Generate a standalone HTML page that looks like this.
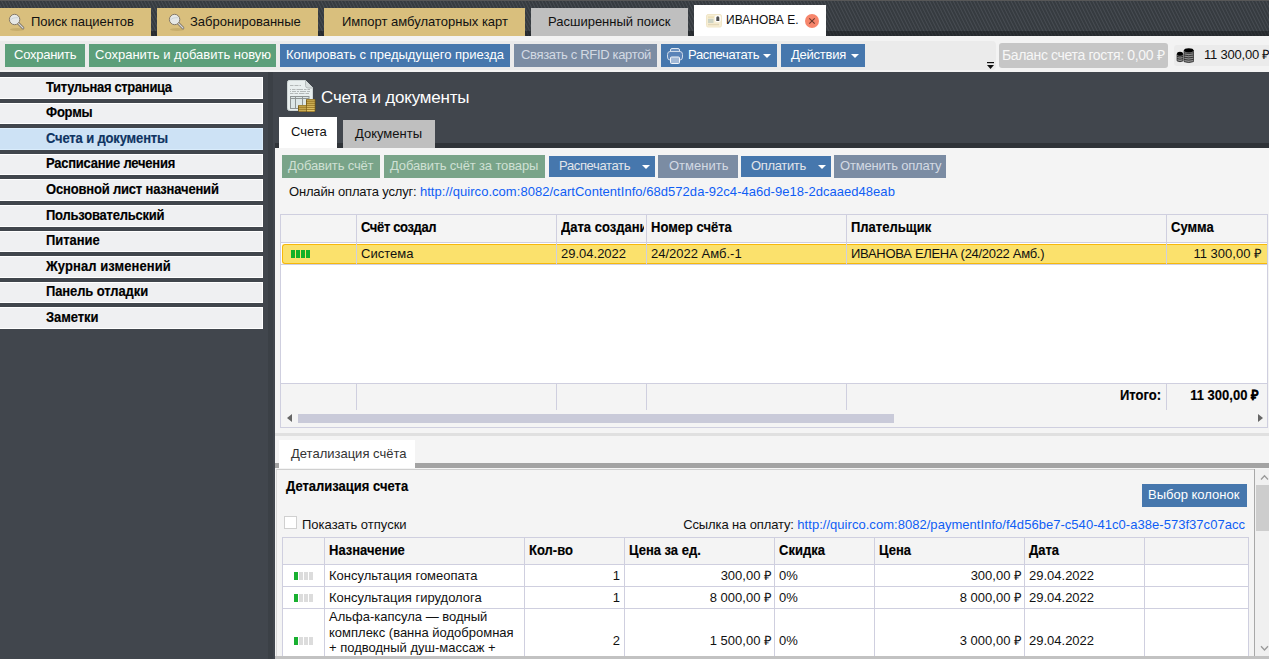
<!DOCTYPE html>
<html><head><meta charset="utf-8">
<style>
*{box-sizing:border-box;margin:0;padding:0}
html,body{width:1269px;height:659px;overflow:hidden;background:#41464d}
body{font-family:"Liberation Sans",sans-serif;font-size:13px;color:#111;position:relative}
.a{position:absolute}
.t{position:absolute;white-space:nowrap;line-height:16px}
#topbar{left:0;top:0;width:1269px;height:36px;background:repeating-linear-gradient(63.43deg,#363b40 0px,#363b40 0.9px,#454a50 1.6px,#454a50 2.0px,#363b40 2.7px,#363b40 3.04px)}
#topline{left:0;top:0;width:1269px;height:1px;background:#575757}
#topband{left:0;top:31px;width:1269px;height:5px;background:rgba(20,22,25,.45)}
.tab{position:absolute;top:8px;height:28px;background:#d9bf7d}
.tab .t{top:13px}
.btn{position:absolute;height:23px;color:#fff}
.btn .t{top:3px}
.green{background:#5c9f7a}
.blue{background:#4677ad}
.dis{background:#7b8ca3;color:#d3dae3}
.dgreen{background:#79a489;color:#cfe0d4}
.menu{position:absolute;left:0;width:263px;height:21.6px;background:#eff0f2;font-weight:bold;border:1px solid #fff;border-left:0}
.menu .t{left:46px;top:1.5px;color:#000;-webkit-text-stroke:0.15px;transform:scaleY(1.08);transform-origin:0 12px}
.caret{position:absolute;width:0;height:0;border-left:4px solid transparent;border-right:4px solid transparent;border-top:4px solid #fff}
.link{color:#0f5ef5}
.vl{position:absolute;width:1px;background:#cfcfdf}
.hl{position:absolute;height:1px;background:#cfcfdf}
.b{font-weight:bold;color:#000;-webkit-text-stroke:0.15px;transform:scaleY(1.08);transform-origin:0 12.5px}
</style></head><body>
<div id="topbar" class="a"></div>
<div id="topline" class="a"></div>
<div id="topband" class="a"></div>

<!-- top tabs -->
<div class="tab" style="left:0;width:151px"><div class="t" style="left:31px;top:6px">Поиск пациентов</div></div>
<div class="tab" style="left:157px;width:161px"><div class="t" style="left:33px;top:6px">Забронированные</div></div>
<div class="tab" style="left:324px;width:201px"><div class="t" style="left:18px;top:6px">Импорт амбулаторных карт</div></div>
<div class="tab" style="left:531px;width:157px;background:#bfbfbf"><div class="t" style="left:17px;top:6px">Расширенный поиск</div></div>
<div class="tab" style="left:694px;top:5px;width:132px;height:31px;background:#fff"><div class="t" style="left:32px;top:7px;font-size:12px">ИВАНОВА Е.</div></div>

<!-- toolbar -->
<div class="a" style="left:0;top:36px;width:1269px;height:36px;background:#f3f3f3"></div>
<div class="a" style="left:0;top:41px;width:996px;height:29px;background:#ebebeb;border-radius:0 4px 4px 0"></div>
<div class="btn green" style="left:5px;top:44px;width:80px"><div class="t" style="left:9px;letter-spacing:-0.25px">Сохранить</div></div>
<div class="btn green" style="left:89px;top:44px;width:187px"><div class="t" style="left:6px">Сохранить и добавить новую</div></div>
<div class="btn blue" style="left:280px;top:44px;width:230px"><div class="t" style="left:6px">Копировать с предыдущего приезда</div></div>
<div class="btn dis" style="left:514px;top:44px;width:143px"><div class="t" style="left:7px;letter-spacing:-0.33px">Связать с RFID картой</div></div>
<div class="btn blue" style="left:661px;top:44px;width:116px"><div class="t" style="left:27px;letter-spacing:-0.36px">Распечатать</div><div class="caret" style="left:102px;top:10px"></div></div>
<div class="btn blue" style="left:781px;top:44px;width:84px"><div class="t" style="left:10px;letter-spacing:-0.25px">Действия</div><div class="caret" style="left:70px;top:10px"></div></div>
<div class="a" style="left:999px;top:43px;width:169px;height:25px;background:#c6c6c6;border-radius:3px"><div class="t" style="left:3px;top:4px;color:#f7f7f7;font-size:14px;letter-spacing:-0.35px">Баланс счета гостя: 0,00 ₽</div></div>
<div class="a" style="left:1174px;top:45px;width:95px;height:21px;background:#ebebeb;border-radius:3px 0 0 3px"><div class="t" style="left:30px;top:2px;letter-spacing:-0.2px">11 300,00 ₽</div></div>

<!-- sidebar -->
<div class="menu" style="top:77px"><div class="t" style="letter-spacing:-0.33px">Титульная страница</div></div>
<div class="menu" style="top:102.6px"><div class="t" style="letter-spacing:-0.22px">Формы</div></div>
<div class="menu" style="top:128.2px;background:#cde2f5;border-color:#d9ecfb"><div class="t" style="letter-spacing:-0.15px;color:#0f3462">Счета и документы</div></div>
<div class="menu" style="top:153.8px"><div class="t" style="letter-spacing:-0.24px">Расписание лечения</div></div>
<div class="menu" style="top:179.4px"><div class="t" style="letter-spacing:-0.18px">Основной лист назначений</div></div>
<div class="menu" style="top:205px"><div class="t" style="letter-spacing:-0.22px">Пользовательский</div></div>
<div class="menu" style="top:230.6px"><div class="t" style="letter-spacing:-0.04px">Питание</div></div>
<div class="menu" style="top:256.2px"><div class="t" style="letter-spacing:0.08px">Журнал изменений</div></div>
<div class="menu" style="top:281.8px"><div class="t" style="letter-spacing:-0.11px">Панель отладки</div></div>
<div class="menu" style="top:307.4px"><div class="t" style="letter-spacing:-0.06px">Заметки</div></div>
<div class="a" style="left:268px;top:72px;width:5px;height:587px;background:#3b4046"></div>

<!-- content header -->
<div class="t" style="left:321px;top:88px;font-size:17px;line-height:20px;color:#fff;-webkit-text-stroke:0;letter-spacing:-0.2px">Счета и документы</div>
<div class="a" style="left:275px;top:143px;width:994px;height:5px;background:#2f3338"></div>
<div class="a" style="left:279px;top:117px;width:58px;height:31px;background:#fff"><div class="t" style="left:12px;top:7px">Счета</div></div>
<div class="a" style="left:343px;top:120px;width:92px;height:28px;background:#bfbfbf"><div class="t" style="left:12px;top:6px">Документы</div></div>

<!-- content panel -->
<div class="a" style="left:275px;top:148px;width:994px;height:511px;background:#f4f4f4"></div>

<!-- content buttons -->
<div class="btn dgreen" style="left:282px;top:155px;width:98px"><div class="t" style="left:6px;letter-spacing:-0.15px">Добавить счёт</div></div>
<div class="btn dgreen" style="left:384px;top:155px;width:161px"><div class="t" style="left:6px;letter-spacing:-0.14px">Добавить счёт за товары</div></div>
<div class="btn blue" style="left:549px;top:156px;width:106px;height:21px;color:#e2e5ea"><div class="t" style="left:10px;top:2px;letter-spacing:-0.36px">Распечатать</div><div class="caret" style="left:93px;top:9px"></div></div>
<div class="btn dis" style="left:658px;top:155px;width:80px"><div class="t" style="left:11px">Отменить</div></div>
<div class="btn blue" style="left:741px;top:156px;width:90px;height:21px;color:#e2e5ea"><div class="t" style="left:10px;top:2px;letter-spacing:-0.35px">Оплатить</div><div class="caret" style="left:77px;top:9px"></div></div>
<div class="btn dis" style="left:834px;top:155px;width:112px"><div class="t" style="left:6px;letter-spacing:-0.2px">Отменить оплату</div></div>
<div class="t" style="left:289px;top:184px"><span style="letter-spacing:-0.17px">Онлайн оплата услуг: </span><span class="link" style="letter-spacing:0.04px">http://quirco.com:8082/cartContentInfo/68d572da-92c4-4a6d-9e18-2dcaaed48eab</span></div>

<!-- table 1 -->
<div class="a" style="left:280px;top:214px;width:988px;height:214px;border:1px solid #cfcfdf;background:#fff"></div>
<div class="a" style="left:281px;top:215px;width:986px;height:27px;background:#f4f4f4"></div>
<div class="hl" style="left:281px;top:242px;width:986px"></div>
<div class="hl" style="left:281px;top:264px;width:986px"></div>
<div class="a" style="left:282px;top:244px;width:985px;height:20px;background:#fbe16c;border:1px solid #f7b80a;border-right:0;border-radius:3px 0 0 3px"></div>
<div class="vl" style="left:356px;top:215px;height:49px"></div>
<div class="vl" style="left:556px;top:215px;height:49px"></div>
<div class="vl" style="left:646px;top:215px;height:49px"></div>
<div class="vl" style="left:846px;top:215px;height:49px"></div>
<div class="vl" style="left:1166px;top:215px;height:49px"></div>
<div class="t b" style="left:361px;top:220px;letter-spacing:-0.36px">Счёт создал</div>
<div class="t b" style="left:561px;top:220px;width:83px;overflow:hidden">Дата создания</div>
<div class="t b" style="left:651px;top:220px">Номер счёта</div>
<div class="t b" style="left:851px;top:220px">Плательщик</div>
<div class="t b" style="left:1171px;top:220px">Сумма</div>
<div class="t" style="left:361px;top:246px">Система</div>
<div class="t" style="left:561px;top:246px">29.04.2022</div>
<div class="t" style="left:651px;top:246px">24/2022 Амб.-1</div>
<div class="t" style="left:851px;top:246px;letter-spacing:-0.3px">ИВАНОВА ЕЛЕНА (24/2022 Амб.)</div>
<div class="t" style="left:1166px;top:246px;width:96px;text-align:right">11 300,00 ₽</div>
<div class="a" style="left:281px;top:384px;width:986px;height:43px;background:#f4f4f4"></div>
<div class="hl" style="left:281px;top:383px;width:986px"></div>
<div class="vl" style="left:356px;top:384px;height:26px"></div>
<div class="vl" style="left:556px;top:384px;height:26px"></div>
<div class="vl" style="left:646px;top:384px;height:26px"></div>
<div class="vl" style="left:846px;top:384px;height:26px"></div>
<div class="vl" style="left:1166px;top:384px;height:26px"></div>
<div class="t b" style="left:1000px;top:388px;width:161px;text-align:right">Итого:</div>
<div class="t b" style="left:1166px;top:388px;width:93px;text-align:right">11 300,00 ₽</div>
<div class="a" style="left:298px;top:414px;width:596px;height:9px;background:#c9cad9"></div>

<!-- separator + detail tab -->
<div class="a" style="left:275px;top:433px;width:994px;height:3px;background:#e0e0e0"></div>
<div class="a" style="left:275px;top:463px;width:994px;height:5px;background:#a3a3a3"></div>
<div class="a" style="left:279px;top:440px;width:136px;height:28px;background:#fff"><div class="t" style="left:12px;top:6px;color:#333">Детализация счёта</div></div>
<div class="a" style="left:276px;top:469px;width:993px;height:187px;border-top:1px solid #cfcfcf;border-left:1px solid #d9d9d9;background:#f4f4f4"></div>
<div class="t b" style="left:286px;top:479px">Детализация счета</div>
<div class="btn blue" style="left:1142px;top:484px;width:105px"><div class="t" style="left:6px">Выбор колонок</div></div>
<div class="a" style="left:284px;top:516px;width:13px;height:13px;background:#fff;border:1px solid #d0d0d0"></div>
<div class="t" style="left:302px;top:517px">Показать отпуски</div>
<div class="t" style="left:600px;top:517px;width:645px;text-align:right"><span style="letter-spacing:-0.12px">Ссылка на оплату: </span><span class="link" style="letter-spacing:0.035px">http://quirco.com:8082/paymentInfo/f4d56be7-c540-41c0-a38e-573f37c07acc</span></div>

<!-- table 2 -->
<div class="a" style="left:282px;top:537px;width:967px;height:130px;border:1px solid #cfcfdf;background:#fff"></div>
<div class="a" style="left:283px;top:538px;width:965px;height:26px;background:#f4f4f4"></div>
<div class="hl" style="left:283px;top:564px;width:965px"></div>
<div class="hl" style="left:283px;top:586px;width:965px"></div>
<div class="hl" style="left:283px;top:608px;width:965px"></div>
<div class="vl" style="left:324px;top:538px;height:130px"></div>
<div class="vl" style="left:524px;top:538px;height:130px"></div>
<div class="vl" style="left:624px;top:538px;height:130px"></div>
<div class="vl" style="left:774px;top:538px;height:130px"></div>
<div class="vl" style="left:874px;top:538px;height:130px"></div>
<div class="vl" style="left:1024px;top:538px;height:130px"></div>
<div class="vl" style="left:1144px;top:538px;height:130px"></div>
<div class="t b" style="left:329px;top:543px">Назначение</div>
<div class="t b" style="left:529px;top:543px">Кол-во</div>
<div class="t b" style="left:629px;top:543px">Цена за ед.</div>
<div class="t b" style="left:779px;top:543px">Скидка</div>
<div class="t b" style="left:879px;top:543px">Цена</div>
<div class="t b" style="left:1029px;top:543px">Дата</div>

<div class="t" style="left:329px;top:568px">Консультация гомеопата</div>
<div class="t" style="left:524px;top:568px;width:96px;text-align:right">1</div>
<div class="t" style="left:624px;top:568px;width:148px;text-align:right">300,00 ₽</div>
<div class="t" style="left:779px;top:568px">0%</div>
<div class="t" style="left:874px;top:568px;width:148px;text-align:right">300,00 ₽</div>
<div class="t" style="left:1029px;top:568px">29.04.2022</div>

<div class="t" style="left:329px;top:590px">Консультация гирудолога</div>
<div class="t" style="left:524px;top:590px;width:96px;text-align:right">1</div>
<div class="t" style="left:624px;top:590px;width:148px;text-align:right">8 000,00 ₽</div>
<div class="t" style="left:779px;top:590px">0%</div>
<div class="t" style="left:874px;top:590px;width:148px;text-align:right">8 000,00 ₽</div>
<div class="t" style="left:1029px;top:590px">29.04.2022</div>

<div class="t" style="left:329px;top:609px">Альфа-капсула — водный</div>
<div class="t" style="left:329px;top:625px">комплекс (ванна йодобромная</div>
<div class="t" style="left:329px;top:640px">+ подводный душ-массаж +</div>
<div class="t" style="left:524px;top:633px;width:96px;text-align:right">2</div>
<div class="t" style="left:624px;top:633px;width:148px;text-align:right">1 500,00 ₽</div>
<div class="t" style="left:779px;top:633px">0%</div>
<div class="t" style="left:874px;top:633px;width:148px;text-align:right">3 000,00 ₽</div>
<div class="t" style="left:1029px;top:633px">29.04.2022</div>

<!-- vertical scrollbar -->
<div class="a" style="left:1254px;top:469px;width:15px;height:187px;background:#f0f0f0;border-left:1px solid #a8a8a8"></div>
<div class="a" style="left:1256px;top:485px;width:13px;height:46px;background:#cdcdcd"></div>
<!-- bottom bar -->
<div class="a" style="left:275px;top:656px;width:994px;height:3px;background:#c2c2c2"></div>

<!-- icons -->
<svg class="a" style="left:6px;top:12px" width="22" height="20" viewBox="0 0 22 20">
 <ellipse cx="11" cy="17.5" rx="7" ry="1.5" fill="#b89e5e" opacity=".55"/>
 <line x1="12.5" y1="11.5" x2="17" y2="16" stroke="#6d655a" stroke-width="2.6" stroke-linecap="round"/>
 <line x1="12.5" y1="11.5" x2="17" y2="16" stroke="#d8d8d8" stroke-width="1.2" stroke-linecap="round"/>
 <circle cx="8.6" cy="7.5" r="5.2" fill="#e6e8e6" stroke="#857a68" stroke-width="1"/>
 <path d="M4.5 8 Q6 5.5 12 5.7" stroke="#c9d3d8" stroke-width="1" fill="none"/>
</svg>
<svg class="a" style="left:166px;top:12px" width="22" height="20" viewBox="0 0 22 20">
 <ellipse cx="11" cy="17.5" rx="7" ry="1.5" fill="#b89e5e" opacity=".55"/>
 <line x1="12.5" y1="11.5" x2="17" y2="16" stroke="#6d655a" stroke-width="2.6" stroke-linecap="round"/>
 <line x1="12.5" y1="11.5" x2="17" y2="16" stroke="#d8d8d8" stroke-width="1.2" stroke-linecap="round"/>
 <circle cx="8.6" cy="7.5" r="5.2" fill="#e6e8e6" stroke="#857a68" stroke-width="1"/>
 <path d="M4.5 8 Q6 5.5 12 5.7" stroke="#c9d3d8" stroke-width="1" fill="none"/>
</svg>
<svg class="a" style="left:706px;top:14px" width="16" height="14" viewBox="0 0 16 14">
 <rect x="0.5" y="0.5" width="15" height="12.5" rx="1.5" fill="#f7eed4" stroke="#f0e6c8"/>
 <rect x="2" y="2.5" width="6" height="1.2" fill="#eadcb0"/>
 <rect x="2" y="4.8" width="5.5" height="4.2" fill="#cdd3c4"/>
 <rect x="8.8" y="1.3" width="6" height="6.8" rx="2" fill="#fff"/>
 <path d="M10.3 7 V3.8 Q10.3 2.3 11.8 2.3 Q13.3 2.3 13.3 3.8 V7 Z" fill="#505050"/>
 <rect x="2" y="9.8" width="11" height="1.5" fill="#e4d8b8"/>
</svg>
<svg class="a" style="left:805px;top:14px" width="14" height="14" viewBox="0 0 14 14">
 <circle cx="7" cy="7" r="7" fill="#f7866c"/>
 <path d="M4.3 4.3 L9.7 9.7 M9.7 4.3 L4.3 9.7" stroke="#6b3a2e" stroke-width="1.1"/>
</svg>
<svg class="a" style="left:666px;top:47px" width="18" height="18" viewBox="0 0 18 18">
 <rect x="4.5" y="1.5" width="9" height="4" rx="1.5" fill="#6f93c0" stroke="#dfe7f1" stroke-width="1"/>
 <path d="M4 4.5 H14 Q16.5 4.5 16.5 7.5 V10 Q16.5 13 14 13 H4 Q1.5 13 1.5 10 V7.5 Q1.5 4.5 4 4.5 Z" fill="#5a83b8" stroke="#cfdbe9" stroke-width="1"/>
 <rect x="4.5" y="10" width="9" height="6.5" rx="1" fill="#a3b9d6" stroke="#f2f5f9" stroke-width="1"/>
</svg>
<svg class="a" style="left:986px;top:61px" width="9" height="9" viewBox="0 0 9 9">
 <rect x="1" y="1" width="7" height="1.2" fill="#111"/>
 <path d="M1 4 H8 L4.5 8 Z" fill="#111"/>
</svg>
<svg class="a" style="left:1176px;top:47px" width="19" height="17" viewBox="0 0 19 17">
 <path d="M1 6.8 V13.8 Q4 15.6 7 13.8 V6.8 Z" fill="#8e8e8e"/>
 <path d="M8 3.3 V14.6 Q12.75 16.6 17.5 14.6 V3.3 Z" fill="#8e8e8e"/>
 <g stroke="#2a2a2a" stroke-width="0.9" fill="none">
  <path d="M1 9.4 Q4 10.6 7 9.4 M1 11.6 Q4 12.8 7 11.6 M1 13.8 Q4 15.6 7 13.8"/>
  <path d="M8 5.8 Q12.75 7.2 17.5 5.8 M8 8 Q12.75 9.4 17.5 8 M8 10.2 Q12.75 11.6 17.5 10.2 M8 12.4 Q12.75 13.8 17.5 12.4 M8 14.6 Q12.75 16.4 17.5 14.6"/>
  <path d="M1 6.8 V13.8 M7 6.8 V13.8 M8 3.3 V14.6 M17.5 3.3 V14.6" stroke-width="0.7"/>
 </g>
 <ellipse cx="4" cy="6.8" rx="3" ry="2" fill="#000"/>
 <ellipse cx="12.75" cy="3.3" rx="4.75" ry="2.1" fill="#000"/>
</svg>
<svg class="a" style="left:286px;top:79px" width="30" height="34" viewBox="0 0 30 34">
 <path d="M3 1.5 H19.5 L26.5 8.5 V29.5 Q26.5 31.5 24.5 31.5 H3.5 Q1.5 31.5 1.5 29.5 V3.5 Q1.5 1.5 3 1.5 Z" fill="#e9efef" stroke="#cfd6d6" stroke-width="1"/>
 <path d="M19.5 1.5 V6.5 Q19.5 9 22 9 H26.5" fill="#d6dcdc" stroke="#b5bcbc" stroke-width="1"/>
 <g stroke="#a4aaaa" stroke-width="0.8">
  <path d="M4 6.5 H7.5 M8.5 6.5 H12.5 M13.5 6.5 H15 M4 10.5 H5 M6 10.5 H9.5 M10.5 10.5 H17 M18 10.5 H20.5 M21.5 10.5 H24 M4 12.5 H5 M6 12.5 H10 M11 12.5 H13 M14 12.5 H20 M21 12.5 H24 M4 14.5 H7.5 M8.5 14.5 H12 M13 14.5 H18.5 M19.5 14.5 H23"/>
 </g>
 <g stroke="#8f9595" stroke-width="1" fill="none">
  <rect x="4.5" y="17.5" width="18.5" height="12" fill="#dde6e6"/>
  <path d="M4.5 19.5 H23 M9.5 17.5 V29.5 M16.5 17.5 V29.5"/>
 </g>
 <g fill="#6e5210">
  <rect x="12" y="26" width="9" height="6.6" rx="1"/>
  <rect x="20" y="20" width="9.5" height="12.6" rx="1"/>
 </g>
 <g fill="#ecd072"><rect x="12.8" y="26.60" width="7.4" height="1.1"/><rect x="12.8" y="28.65" width="7.4" height="1.1"/><rect x="12.8" y="30.70" width="7.4" height="1.1"/><rect x="20.8" y="20.60" width="7.9" height="1.1"/><rect x="20.8" y="22.65" width="7.9" height="1.1"/><rect x="20.8" y="24.70" width="7.9" height="1.1"/><rect x="20.8" y="26.75" width="7.9" height="1.1"/><rect x="20.8" y="28.80" width="7.9" height="1.1"/><rect x="20.8" y="30.85" width="7.9" height="1.1"/></g>
 <g fill="#b08a34"><rect x="12.8" y="27.70" width="7.4" height="0.9"/><rect x="12.8" y="29.75" width="7.4" height="0.9"/><rect x="12.8" y="31.80" width="7.4" height="0.9"/><rect x="20.8" y="21.70" width="7.9" height="0.9"/><rect x="20.8" y="23.75" width="7.9" height="0.9"/><rect x="20.8" y="25.80" width="7.9" height="0.9"/><rect x="20.8" y="27.85" width="7.9" height="0.9"/><rect x="20.8" y="29.90" width="7.9" height="0.9"/><rect x="20.8" y="31.95" width="7.9" height="0.9"/></g>
</svg>
<div class="a" style="left:291px;top:250px;width:19px;height:8px;background:repeating-linear-gradient(90deg,#12b028 0,#12b028 4px,transparent 4px,transparent 5px)"></div>
<div class="a" style="left:294px;top:572px;width:19px;height:8px;background:linear-gradient(90deg,#18b030 0,#18b030 4px,transparent 4px,transparent 5px,#dcdcdc 5px,#dcdcdc 9px,transparent 9px,transparent 10px,#dcdcdc 10px,#dcdcdc 14px,transparent 14px,transparent 15px,#dcdcdc 15px)"></div>
<div class="a" style="left:294px;top:594px;width:19px;height:8px;background:linear-gradient(90deg,#18b030 0,#18b030 4px,transparent 4px,transparent 5px,#dcdcdc 5px,#dcdcdc 9px,transparent 9px,transparent 10px,#dcdcdc 10px,#dcdcdc 14px,transparent 14px,transparent 15px,#dcdcdc 15px)"></div>
<div class="a" style="left:294px;top:637px;width:19px;height:8px;background:linear-gradient(90deg,#18b030 0,#18b030 4px,transparent 4px,transparent 5px,#dcdcdc 5px,#dcdcdc 9px,transparent 9px,transparent 10px,#dcdcdc 10px,#dcdcdc 14px,transparent 14px,transparent 15px,#dcdcdc 15px)"></div>
<div class="a" style="left:287px;top:414px;width:0;height:0;border-top:4.5px solid transparent;border-bottom:4.5px solid transparent;border-right:5px solid #666"></div>
<div class="a" style="left:1258px;top:414px;width:0;height:0;border-top:4.5px solid transparent;border-bottom:4.5px solid transparent;border-left:5px solid #666"></div>
<svg class="a" style="left:1260px;top:474px" width="9" height="7" viewBox="0 0 9 7"><path d="M1 5.5 L4.5 1.8 L8 5.5" stroke="#9a9a9a" stroke-width="1.3" fill="none"/></svg>
<svg class="a" style="left:1260px;top:645px" width="9" height="7" viewBox="0 0 9 7"><path d="M1 1.2 L4.5 5 L8 1.2" stroke="#9a9a9a" stroke-width="1.3" fill="none"/></svg>
</body></html>
